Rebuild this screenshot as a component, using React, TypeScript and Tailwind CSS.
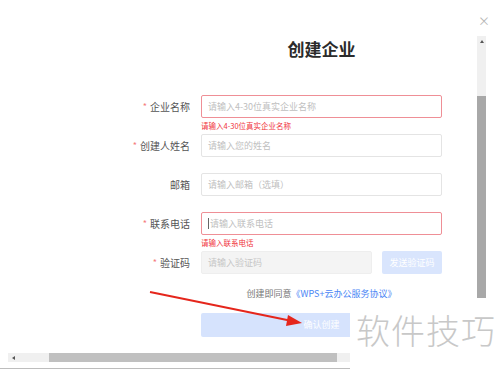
import React from "react"

const font = { fontFamily: '"Noto Sans CJK SC", "Noto Sans", sans-serif' }

type Field = {
  label: string
  required: boolean
  placeholder: string
  error?: string
  caret?: boolean
}

const fields: Field[] = [
  { label: "企业名称", required: true, placeholder: "请输入4-30位真实企业名称", error: "请输入4-30位真实企业名称" },
  { label: "创建人姓名", required: true, placeholder: "请输入您的姓名" },
  { label: "邮箱", required: false, placeholder: "请输入邮箱（选填）" },
  { label: "联系电话", required: true, placeholder: "请输入联系电话", error: "请输入联系电话", caret: true },
]

function Label({ text, required }: { text: string; required: boolean }) {
  return (
    <div className="w-[201px] h-[23px] pr-[11px] flex items-center justify-end text-[10px] text-[#555]">
      {required && <span className="text-[#f57c7c] mr-[3px] text-[9px]">*</span>}
      {text}
    </div>
  )
}

export default function App() {
  return (
    <div className="relative w-[500px] h-[372px] overflow-hidden bg-white" style={font}>
      {/* close */}
      <div className="absolute left-[478px] top-[15px] text-[12px] leading-none text-[#b5b5b5]">×</div>

      <div className="flex">
        <div className="w-[477px] pt-[39px]">
          <h1 className="ml-[201px] w-[241px] text-center text-[17px] font-bold leading-[20px] text-[#2b2b2b]">
            创建企业
          </h1>

          <div className="mt-[36px]">
            {fields.map((f) => (
              <div key={f.label} className="flex h-[39px]">
                <Label text={f.label} required={f.required} />
                <div className="w-[241px]">
                  <div
                    className={
                      "h-[23px] rounded-[2px] border flex items-center px-[6px] text-[9px] text-[#c0c0c0] " +
                      (f.error ? "border-[#ef8f96]" : "border-[#e4e4e4]")
                    }
                  >
                    {f.caret && <span className="w-px h-[11px] bg-[#666] mr-[1px]" />}
                    {f.placeholder}
                  </div>
                  {f.error && (
                    <div className="text-[7.5px] leading-[16px] text-[#f0343c]">{f.error}</div>
                  )}
                </div>
              </div>
            ))}

            <div className="flex h-[23px]">
              <Label text="验证码" required />
              <div className="w-[171px] h-[23px] rounded-[2px] bg-[#f4f4f4] border border-[#eeeeee] flex items-center px-[6px] text-[9px] text-[#c6c6c6]">
                请输入验证码
              </div>
              <div className="ml-[10px] w-[60px] h-[23px] rounded-[2px] bg-[#d9e5fd] flex items-center justify-center text-[9px] text-white">
                发送验证码
              </div>
            </div>

            <div className="mt-[14px] ml-[201px] w-[241px] text-center text-[9px] leading-[12px] text-[#777]">
              创建即同意<span className="text-[#4a86f5]">《WPS+云办公服务协议》</span>
            </div>

            <div className="mt-[13px] ml-[201px] w-[241px] h-[24px] rounded-[2px] bg-[#d6e3fd] flex items-center justify-center text-[9px] text-white">
              确认创建
            </div>
          </div>
        </div>

        {/* vertical scrollbar */}
        <div className="mt-[36px] w-[9px] h-[262px] flex flex-col">
          <div className="h-[60px] bg-[#f0f0f0] flex justify-center pt-[4px]">
            <div className="w-0 h-0 border-l-[2px] border-r-[2px] border-b-[3px] border-l-transparent border-r-transparent border-b-[#555]" />
          </div>
          <div className="flex-1 bg-[#a8a8a8]" />
        </div>
      </div>

      {/* horizontal scrollbar */}
      <div className="mt-[16px] ml-[8px] w-[342px] h-[9px] flex">
        <div className="w-[41px] bg-[#f0f0f0] flex items-center pl-[4px]">
          <div className="w-0 h-0 border-t-[2px] border-b-[2px] border-r-[3px] border-t-transparent border-b-transparent border-r-[#555]" />
        </div>
        <div className="flex-1 bg-[#c0c0c0]" />
        <div className="w-[13px] bg-[#f0f0f0]" />
      </div>
      <div className="mt-[6px] w-[350px] h-px bg-[#bdbdbd]" />

      {/* watermark */}
      <div className="absolute left-[350px] top-[306px] w-[150px] h-[66px] bg-white pl-[6px] pt-[4px] text-[34px] leading-[40px] text-[#c8c8c8] font-light tracking-[1px]">
        软件技巧
      </div>

      {/* red arrow annotation */}
      <svg className="absolute left-0 top-0" width="500" height="372">
        <line x1="150" y1="292" x2="292" y2="321" stroke="#e5261c" strokeWidth="2" />
        <polygon points="302,323 288,315 286,326" fill="#e5261c" />
      </svg>
    </div>
  )
}
